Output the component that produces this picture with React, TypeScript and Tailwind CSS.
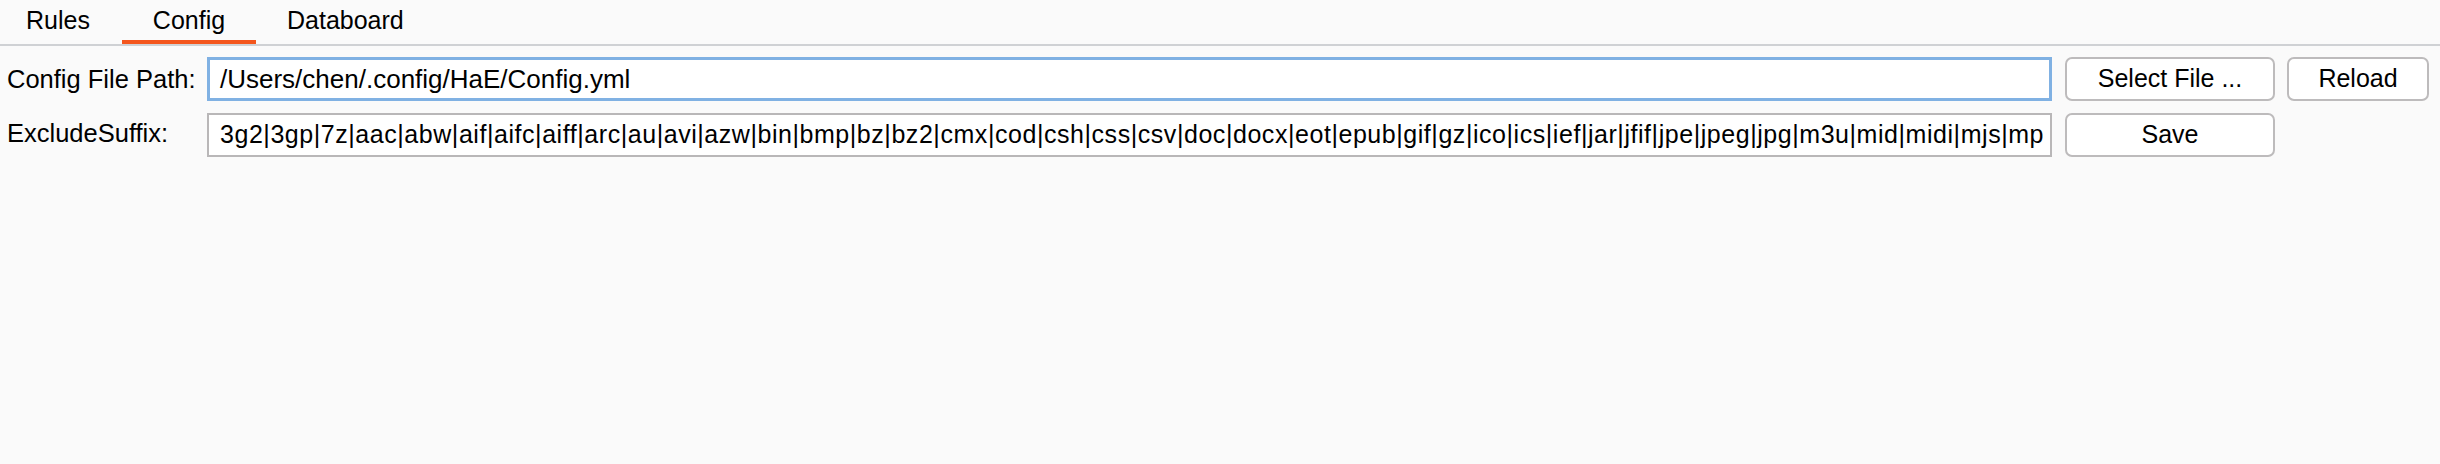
import React from "react";

const suffix =
  "3g2|3gp|7z|aac|abw|aif|aifc|aiff|arc|au|avi|azw|bin|bmp|bz|bz2|cmx|cod|csh|css|csv|doc|docx|eot|epub|gif|gz|ico|ics|ief|jar|jfif|jpe|jpeg|jpg|m3u|mid|midi|mjs|mp";

export default function App() {
  return (
    <div
      className="w-[2440px] h-[464px] bg-[#fafafa] text-black overflow-hidden"
      style={{ fontFamily: '"Liberation Sans", Arial, sans-serif' }}
    >
      {/* Tabs */}
      <div className="flex h-[46px] border-b-2 border-[#cfd1d4] text-[25px]">
        <div className="w-[117px] pl-[26px] pt-[4px] leading-[32px]">Rules</div>
        <div className="relative ml-[5px] w-[134px] flex justify-center pt-[4px] leading-[32px]">
          Config
          <div className="absolute left-0 right-0 bottom-0 h-[4px] bg-[#f4561d]" />
        </div>
        <div className="pl-[31px] pt-[4px] leading-[32px]">Databoard</div>
      </div>

      {/* Form */}
      <div className="mt-[11px] pl-[7px] pr-[11px] flex flex-col gap-[12px] text-[25.5px]">
        <div className="flex items-center h-[44px]">
          <div className="w-[200px] shrink-0">Config File Path:</div>
          <div className="flex-1 h-[44px] bg-white border-[3px] border-[#80b1e3] flex items-center pl-[10px] text-[26px]">
            /Users/chen/.config/HaE/Config.yml
          </div>
          <button className="ml-[13px] w-[210px] h-[44px] bg-white border-2 border-[#bdbbbc] rounded-[7px] text-[25px]">
            Select File ...
          </button>
          <button className="ml-[12px] w-[142px] h-[44px] bg-white border-2 border-[#bdbbbc] rounded-[7px] text-[25px]">
            Reload
          </button>
        </div>
        <div className="flex items-center h-[44px]">
          <div className="w-[200px] shrink-0 -mt-[4px]">ExcludeSuffix:</div>
          <div className="flex-1 min-w-0 h-[44px] bg-white border-2 border-[#b9b7b8] flex items-center pl-[11px] pr-[4px] overflow-hidden whitespace-nowrap text-[25px] tracking-[0.55px]">
            {suffix}
          </div>
          <button className="ml-[13px] w-[210px] h-[44px] bg-white border-2 border-[#bdbbbc] rounded-[7px] text-[25px]">
            Save
          </button>
          <div className="ml-[12px] w-[142px] shrink-0" />
        </div>
      </div>
    </div>
  );
}
